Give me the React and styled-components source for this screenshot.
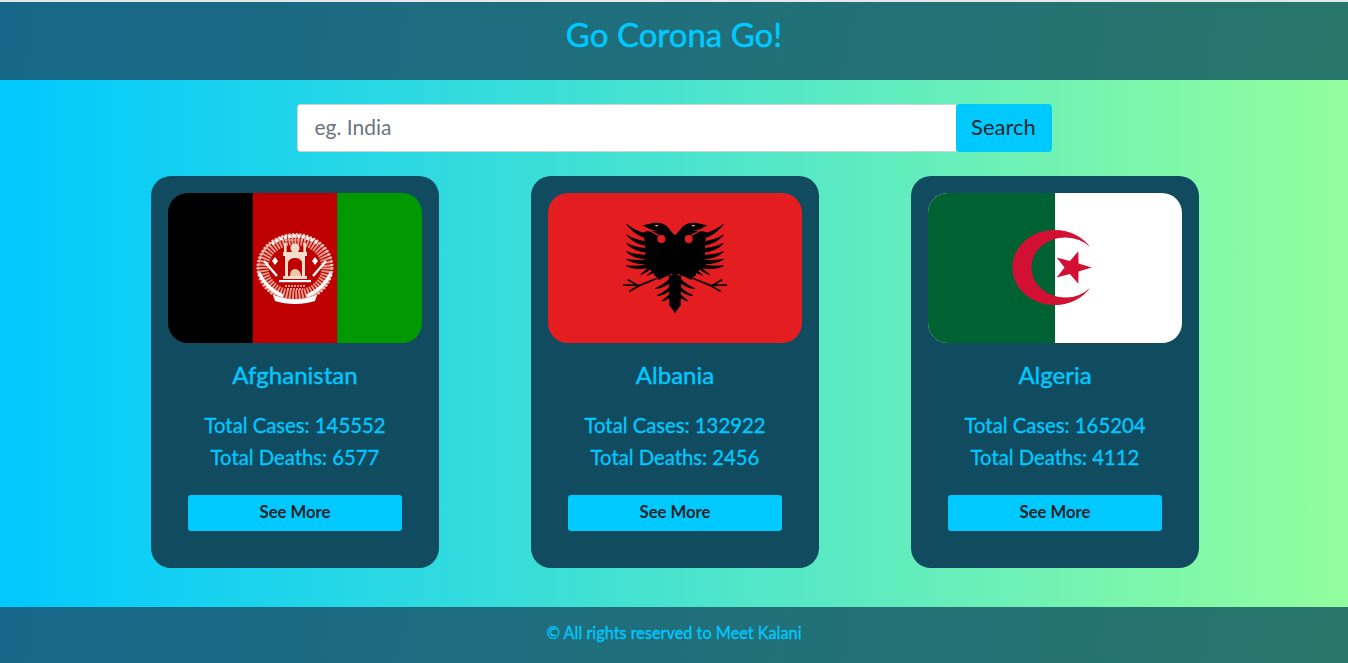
import React from "react";
import styled, { createGlobalStyle } from "styled-components";

const Global = createGlobalStyle`
  html, body { margin: 0; padding: 0; }
  body { font-family: "Lato", "Noto Sans", sans-serif; }
  * { box-sizing: border-box; }
`;
const Page = styled.div`
  height: 663px; overflow: hidden; display: flex; flex-direction: column;
  background: linear-gradient(to right, #00c9ff, #92fe9d);
`;
const Bar = styled.div`
  background: linear-gradient(100deg, #17678a, #29766a);
  color: #00c9ff; display: flex; justify-content: center;
`;
const Header = styled(Bar)`
  height: 80px; border-top: 2px solid #e4e8ea; padding-top: 13px;
`;
const Title = styled.h1`
  margin: 0; font-size: 33px; line-height: 38px; font-weight: 400; -webkit-text-stroke: 0.5px #00c9ff;
`;
const Main = styled.main`
  flex: 1; display: flex; flex-direction: column; align-items: center; padding-top: 24px;
`;
const Search = styled.form`
  display: flex; width: 755px; height: 48px; margin-bottom: 24px;
`;
const Input = styled.input`
  flex: 1; min-width: 0; height: 48px; padding: 0 17px 4px; font: 400 21px "Lato", sans-serif;
  border: 1px solid #ced4da; border-right: 0; border-radius: 4px 0 0 4px; background: #fff; color: #333;
  &::placeholder { color: #6c757d; opacity: 1; }
`;
const SearchButton = styled.button`
  width: 96px; height: 48px; padding: 0 0 4px; border: 0; border-radius: 4px; background: #00c9ff;
  color: #212529; font: 400 22px "Lato", sans-serif;
`;
const Cards = styled.div`
  display: flex; gap: 92px; padding-left: 2px;
`;
const Card = styled.article`
  width: 288px; height: 392px; background: #114b5f; border-radius: 20px; padding: 17px;
  display: flex; flex-direction: column; align-items: center; color: #00c9ff;
`;
const FlagBox = styled.div`
  width: 254px; height: 150px; border-radius: 20px; overflow: hidden; flex: none;
  svg { display: block; }
`;
const Soft = styled.g`
  filter: blur(0.35px);
`;
const Name = styled.h2`
  margin: 18px 0 24px; font-size: 24px; line-height: 28px; font-weight: 400; -webkit-text-stroke: 0.4px #00c9ff;
`;
const Stat = styled.p`
  margin: 0 0 8px; font-size: 20.3px; line-height: 24px; font-weight: 400; -webkit-text-stroke: 0.3px #00c9ff;
`;
const More = styled.button`
  width: 214px; height: 36px; margin-top: 18px; padding: 0 0 3px; border: 0; border-radius: 3px; background: #00c9ff;
  color: #212529; font: 700 16.7px "Lato", sans-serif;
`;
const Footer = styled(Bar)`
  height: 56px; align-items: center; padding-bottom: 5px; font-size: 16.3px; font-weight: 400; -webkit-text-stroke: 0.3px #00c9ff;
`;

const Afghan = () => (
  <svg width="254" height="150" viewBox="0 0 254 150">
    <rect width="85" height="150" fill="#000" />
    <rect x="84.7" width="84.6" height="150" fill="#be0000" />
    <rect x="169.3" width="84.7" height="150" fill="#090" />
    <Soft>
      <ellipse cx="127" cy="74.5" rx="32" ry="28" fill="none" stroke="#e39a8a" strokeWidth="11" strokeDasharray="2 1.2" />
      <ellipse cx="127" cy="74.5" rx="37" ry="33" fill="none" stroke="#f0c8bc" strokeWidth="3" strokeDasharray="2 1.6" />
      <path d="M104 51a34 30 0 0 1 46 0" fill="none" stroke="#fff" strokeWidth="3" strokeDasharray="3 1.5" />
      <path d="M91 80c6 13 15 19 24 23M163 80c-6 13-15 19-24 23" fill="none" stroke="#fff" strokeWidth="3.2" />
      <path d="M105 102c14 6 30 6 44 0l-2 6c-12 4-28 4-40 0z" fill="#fff" />
      <path d="M104 68l3-4 3 4-3 4zM150 68l-3-4-3 4 3 4z" fill="#fff" />
      <path d="M96 68l13 15M158 68l-13 15" stroke="#fff" strokeWidth="2.4" />
      <circle cx="127" cy="55" r="4.6" fill="#f5dcc8" />
      <rect x="116" y="50" width="2.6" height="9" fill="#f5dcc8" />
      <rect x="135.4" y="50" width="2.6" height="9" fill="#f5dcc8" />
      <path d="M115 59h24v4h-2v20h2v3h-24v-3h2V63h-2z" fill="#f6ddcc" />
      <path d="M120 83V70a7 5 0 0 1 14 0v13z" fill="#be0000" />
      <path d="M122 83c0-7 5-8 8-6 2 2 3 3 3 6z" fill="#e8c9a8" />
      <rect x="111" y="87" width="32" height="2.2" fill="#fff" />
      <path d="M117 93h20M119 96h16" stroke="#f3cfc0" strokeWidth="1.4" strokeDasharray="2 1" />
      <path d="M115 47h24M120 44h14" stroke="#f3cfc0" strokeWidth="1.1" strokeDasharray="2 1.5" />
    </Soft>
  </svg>
);

const feathers = [
  [110, 73, 175, 110, 134, 100, 6], [110, 105, 175, 132, 132, 126, 5.5], [110, 130, 175, 152, 130, 148, 5.5],
  [110, 155, 175, 172, 130, 170, 5.5], [110, 178, 175, 186, 135, 188, 5], [110, 198, 178, 198, 140, 206, 4.5],
  [152, 224, 190, 194, 172, 212, 4.5], [172, 226, 200, 204, 190, 216, 4.5], [192, 226, 212, 210, 204, 220, 3.5],
  [195, 266, 252, 228, 232, 256, 6], [201, 287, 252, 250, 235, 278, 5.5], [216, 303, 252, 270, 240, 292, 5.5],
];
const EagleHalf = ({ mirror }) => (
  <g transform={mirror ? "translate(510 0) scale(-1 1)" : undefined}>
    <path d="M256 106C243 97 238 82 224 74C212 67 192 66 178 72L157 76L180 88L202 92C185 92 170 92 158 98C168 120 166 170 163 195L186 214L206 240L244 222L256 228z" fill="#000" />
    <path d="M176 90L206 106" stroke="#e41e20" strokeWidth="4" />
    <circle cx="214" cy="117" r="12" fill="#e41e20" />
    <ellipse cx="200" cy="77" rx="5" ry="2" fill="#f0b8b0" />
    <path d="M236 226L238 316L256 340V226z" fill="#000" />
    {feathers.map(([a, b, c, d, e, f, w]) => (
      <path key={`${a}-${b}`} d={`M${a} ${b}Q${e} ${f - w} ${c} ${d - w}L${c} ${d + w}Q${e} ${f + w} ${a} ${b}Z`} fill="#000" stroke="#000" strokeWidth="3" strokeLinejoin="round" />
    ))}
    <path d="M101 255L150 256L198 236M115 240L145 257M120 273L150 256" fill="none" stroke="#000" strokeWidth="5" strokeLinecap="round" />
  </g>
);
const Albania = () => (
  <svg width="254" height="150" viewBox="-126 -21 762 450">
    <rect x="-126" y="-21" width="762" height="450" fill="#e41e20" />
    <EagleHalf />
    <EagleHalf mirror />
  </svg>
);

const star = Array.from({ length: 10 }, (_, i) => {
  const a = (i * Math.PI) / 5;
  const r = i % 2 ? 0.4 : 1;
  return `${(144.3 + 19.4 * r * Math.cos(a)).toFixed(2)},${(74.5 + 17.1 * r * Math.sin(a)).toFixed(2)}`;
}).join(" ");
const Algeria = () => (
  <svg width="254" height="150" viewBox="0 0 254 150">
    <rect width="254" height="150" fill="#fff" />
    <rect width="127" height="150" fill="#006233" />
    <path d="M162 54A42.3 37.5 0 1 0 162 95A33.9 30 0 1 1 162 54Z" fill="#d21034" />
    <polygon points={star} fill="#d21034" />
  </svg>
);

const data = [
  { name: "Afghanistan", cases: 145552, deaths: 6577, Flag: Afghan },
  { name: "Albania", cases: 132922, deaths: 2456, Flag: Albania },
  { name: "Algeria", cases: 165204, deaths: 4112, Flag: Algeria },
];

export default function App() {
  return (
    <Page>
      <Global />
      <Header><Title>Go Corona Go!</Title></Header>
      <Main>
        <Search onSubmit={(e) => e.preventDefault()}>
          <Input placeholder="eg. India" />
          <SearchButton>Search</SearchButton>
        </Search>
        <Cards>
          {data.map(({ name, cases, deaths, Flag }) => (
            <Card key={name}>
              <FlagBox><Flag /></FlagBox>
              <Name>{name}</Name>
              <Stat>Total Cases: {cases}</Stat>
              <Stat>Total Deaths: {deaths}</Stat>
              <More>See More</More>
            </Card>
          ))}
        </Cards>
      </Main>
      <Footer>© All rights reserved to Meet Kalani</Footer>
    </Page>
  );
}
